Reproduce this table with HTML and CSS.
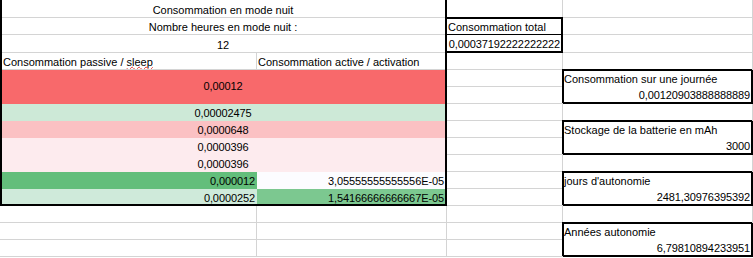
FILE: index.html
```html
<!DOCTYPE html>
<html lang="fr">
<head>
<meta charset="utf-8">
<title>Consommation en mode nuit</title>
<link rel="stylesheet" href="styles.css">
</head>
<body>
<div class="sheet">
  <div class="tbl">
    <div class="c m">Consommation en mode nuit</div>
    <div class="c m">Nombre heures en mode nuit :</div>
    <div class="c m">12</div>
    <div class="c pl3"><span>Consommation passive / <span class="sp">sleep</span></span></div>
    <div class="c pl2">Consommation active / activation</div>
    <div class="c m tall f red n">0,00012</div>
    <div class="c m f lgreen n">0,00002475</div>
    <div class="c m f pink n">0,0000648</div>
    <div class="c m f lpink n">0,0000396</div>
    <div class="c m f lpink n">0,0000396</div>
    <div class="c r ra f green n">0,000012</div>
    <div class="c r rb f white n">3,05555555555556E-05</div>
    <div class="c r ra f lgreen2 n">0,0000252</div>
    <div class="c r rb f green2 n">1,54166666666667E-05</div>
  </div>

  <div class="c"></div>
  <div class="c"></div>

  <div class="tot">
    <div class="tl">Consommation total</div>
    <div class="tv n">0,00037192222222222</div>
  </div>
  <div class="c"></div>

  <div class="c"></div>

  <div class="c"></div>
  <div class="c"></div>

  <div class="c"></div>
  <div class="box">
    <div class="bl">Consommation sur une journée</div>
    <div class="bv n">0,00120903888888889</div>
  </div>

  <div class="c"></div>

  <div class="c"></div>
  <div class="c"></div>

  <div class="c"></div>
  <div class="box">
    <div class="bl">Stockage de la batterie en mAh</div>
    <div class="bv n">3000</div>
  </div>

  <div class="c"></div>

  <div class="c"></div>
  <div class="c"></div>

  <div class="c"></div>
  <div class="box">
    <div class="bl">jours d'autonomie</div>
    <div class="bv n">2481,30976395392</div>
  </div>

  <div class="c"></div>

  <div class="c"></div>
  <div class="c"></div>
  <div class="c"></div>
  <div class="c"></div>

  <div class="c"></div>
  <div class="c"></div>
  <div class="c"></div>
  <div class="box">
    <div class="bl">Années autonomie</div>
    <div class="bv n">6,79810894233951</div>
  </div>

  <div class="c"></div>
  <div class="c"></div>
  <div class="c"></div>
</div>
</body>
</html>
```

FILE: styles.css
```css
html, body {
  margin: 0;
  padding: 0;
  background: #ffffff;
}

body {
  font-family: "Liberation Sans", Arial, sans-serif;
  font-size: 11px;
  color: #000000;
  overflow: hidden;
}

.sheet {
  display: grid;
  grid-template-columns: 257px 190px 116px 190px;
  grid-template-rows: 18px 17px 18px repeat(12, 17px);
}

.tbl {
  grid-column: 1 / 3;
  grid-row: 1 / 13;
  display: grid;
  grid-template-columns: 257px 190px;
  grid-template-rows: 18px 17px 18px repeat(9, 17px);
  position: relative;
}

.tbl::after {
  content: "";
  position: absolute;
  inset: 0;
  border-left: 2px solid #000;
  border-right: 2px solid #000;
  border-bottom: 2px solid #000;
  pointer-events: none;
}

.c {
  box-sizing: border-box;
  border-right: 1px solid #d4d4d4;
  border-bottom: 1px solid #d4d4d4;
  display: flex;
  align-items: flex-end;
  line-height: 13px;
  white-space: nowrap;
  overflow: hidden;
  min-width: 0;
}

.m {
  grid-column: span 2;
  justify-content: center;
}

.tall {
  grid-row: span 2;
  align-items: center;
}

.pl3 { padding-left: 3px; }
.pl2 { padding-left: 1px; }

.r { justify-content: flex-end; }
.ra { padding-right: 1px; }
.rb { padding-right: 2px; }

.n { letter-spacing: -0.1px; }

.f { border-color: transparent; }
.red { background: #f8696b; }
.lgreen { background: #cde9d7; }
.lgreen2 { background: #cfeada; }
.pink { background: #fbc1c3; }
.lpink { background: #fdebee; }
.green { background: #63be7b; }
.green2 { background: #7cc890; }
.white { background: #fcfcff; }

.sp {
  text-decoration: underline wavy #e5312f;
  text-decoration-thickness: 1px;
  text-underline-offset: 0px;
  text-decoration-skip-ink: none;
}

.tot {
  grid-row: span 2;
  display: grid;
  grid-template-rows: 17px 18px;
  position: relative;
  z-index: 1;
  box-shadow: inset -2px -2px 0 #000, inset 0 1px 0 #000, 0 -1px 0 #000;
}

.tl, .tv, .bl, .bv {
  display: flex;
  align-items: flex-end;
  line-height: 13px;
  white-space: nowrap;
  box-sizing: border-box;
  padding-bottom: 1px;
}

.tl {
  border-bottom: 1px solid #000;
  padding-bottom: 0;
  padding-left: 1px;
}

.tv {
  justify-content: flex-end;
  padding-right: 3px;
  padding-bottom: 2px;
}

.box {
  grid-row: span 2;
  display: grid;
  grid-template-rows: 17px 17px;
  position: relative;
  z-index: 1;
  box-shadow: inset -2px -2px 0 #000, inset 1px 1px 0 #000, -1px -1px 0 #000;
}

.bl {
  padding-left: 1px;
}

.bv {
  justify-content: flex-end;
  padding-right: 3px;
  padding-bottom: 2px;
}
```
